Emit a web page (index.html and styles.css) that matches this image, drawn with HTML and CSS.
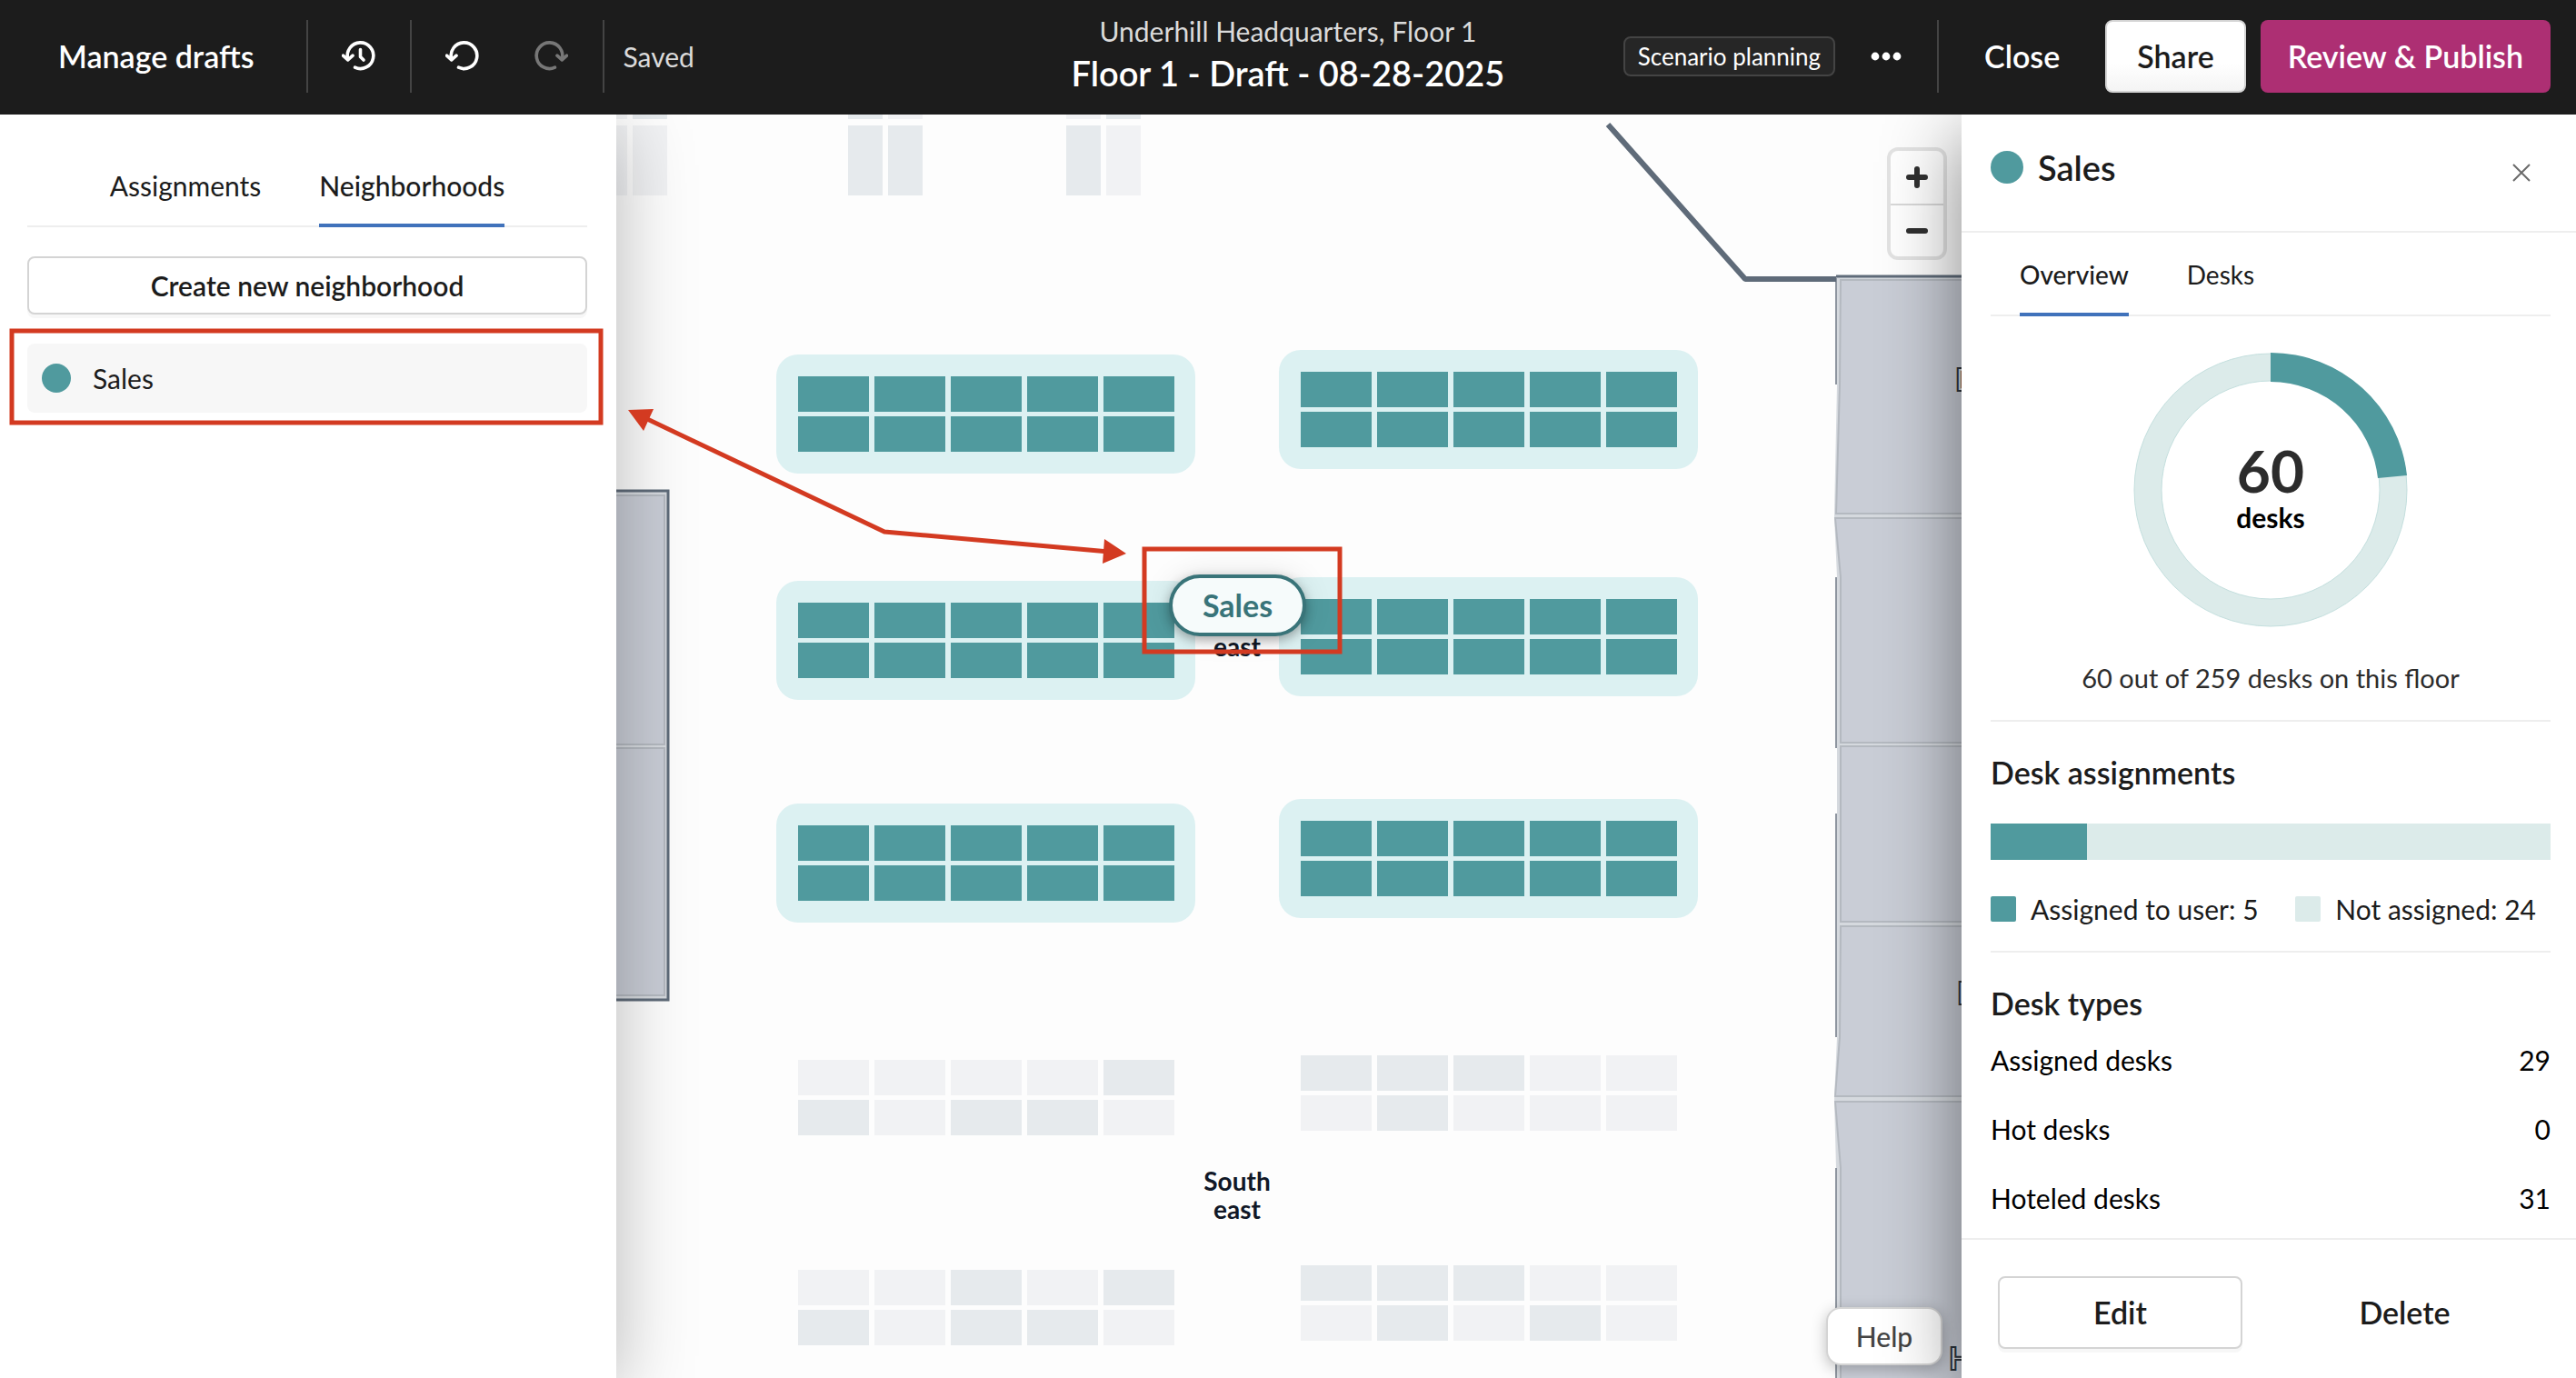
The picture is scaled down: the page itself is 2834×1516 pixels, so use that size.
FILE: index.html
```html
<!DOCTYPE html>
<html lang="en">
<head>
<meta charset="utf-8">
<meta name="viewport" content="width=device-width, initial-scale=1">
<title>Underhill Headquarters, Floor 1 - Draft</title>
<link rel="stylesheet" href="styles.css">
</head>
<body>
<div class="app">
  <header class="topbar">
    <div class="topbar-left">
      <button class="link-button" type="button">Manage drafts</button>
      <span class="rule"></span>
      <button class="icon-button" type="button" aria-label="Version history">
        <svg class="icon" viewBox="0 0 40 40">
          <path d="M14.500 32.200A14.300 14.300 0 1 0 6.700 23"/>
          <path d="M1.500 19.200L6.700 23.800L12 19.200"/>
          <path d="M20.500 12.500V20.500L24 24"/>
        </svg>
      </button>
      <span class="rule"></span>
      <div class="history-group">
        <button class="icon-button" type="button" aria-label="Undo">
          <svg class="icon" viewBox="0 0 40 40">
            <path d="M14.500 32.200A14.300 14.300 0 1 0 6.700 23"/>
            <path d="M1.500 19.200L6.700 23.800L12 19.200"/>
          </svg>
        </button>
        <button class="icon-button" type="button" aria-label="Redo" disabled>
          <svg class="icon" viewBox="0 0 40 40">
            <path d="M25.500 32.200A14.300 14.300 0 1 1 33.300 23"/>
            <path d="M38.500 19.200L33.300 23.800L28 19.200"/>
          </svg>
        </button>
      </div>
      <span class="rule"></span>
      <span class="saved">Saved</span>
    </div>
    <div class="topbar-title">
      <p class="crumb">Underhill Headquarters, Floor 1</p>
      <h1 class="draft-name">Floor 1 - Draft - 08-28-2025</h1>
    </div>
    <div class="topbar-right">
      <span class="chip">Scenario planning</span>
      <button class="more-button" type="button" aria-label="More options">
        <svg class="dots" viewBox="0 0 34 10"><circle cx="5" cy="5" r="4.400"/><circle cx="17" cy="5" r="4.400"/><circle cx="29" cy="5" r="4.400"/></svg>
      </button>
      <span class="rule"></span>
      <button class="link-button close-button" type="button">Close</button>
      <button class="share-button" type="button">Share</button>
      <button class="publish-button" type="button">Review &amp; Publish</button>
    </div>
  </header>

  <main class="workspace">
    <aside class="side-left">
      <div class="tabs tabs-left" role="tablist">
        <button class="tab" type="button" role="tab" aria-selected="false">Assignments</button>
        <button class="tab tab-active" type="button" role="tab" aria-selected="true">Neighborhoods</button>
      </div>
      <button class="outline-button create-button" type="button">Create new neighborhood</button>
      <ul class="neighborhoods">
        <li><a class="neighborhood" href="#sales"><span class="swatch-dot"></span>Sales</a></li>
      </ul>
    </aside>

    <section class="map" aria-label="Floor map">
      <svg class="floor" viewBox="678 126 1480 1390" preserveAspectRatio="xMinYMin slice">
        <defs>
          <g id="desk-row">
            <rect width="78" height="39"/><rect x="84" width="78" height="39"/><rect x="168" width="78" height="39"/><rect x="252" width="78" height="39"/><rect x="336" width="78" height="39"/>
          </g>
          <g id="desk-block"><use href="#desk-row"/><use href="#desk-row" y="44"/></g>
          <g id="pod">
            <rect class="pod-zone" width="461" height="131" rx="24"/>
            <use href="#desk-block" class="desk-sales" x="24" y="24"/>
          </g>
        </defs>

        <g class="desk-light">
          <path d="M678 126h12v5h-12zM678 138h12v77h-12zM696 138h38v77h-38zM977 126h38v5h-38zM1173 126h38v5h-38zM1217 138h38v77h-38z"/>
        </g>
        <g class="desk-dark">
          <path d="M696 126h38v5h-38zM933 126h38v5h-38zM933 138h38v77h-38zM977 138h38v77h-38zM1173 138h38v77h-38zM1217 126h38v5h-38z"/>
        </g>

        <use href="#pod" x="854" y="390"/>
        <use href="#pod" x="1407" y="385"/>
        <use href="#pod" x="854" y="639"/>
        <use href="#pod" x="1407" y="635"/>
        <use href="#pod" x="854" y="884"/>
        <use href="#pod" x="1407" y="879"/>

        <use href="#desk-block" class="desk-light" x="878" y="1166"/>
        <path class="desk-dark" d="M1214 1166h78v39h-78zM878 1210h78v39h-78zM1046 1210h78v39h-78zM1130 1210h78v39h-78z"/>
        <use href="#desk-block" class="desk-light" x="1431" y="1161"/>
        <path class="desk-dark" d="M1431 1161h78v39h-78zM1515 1161h78v39h-78zM1599 1161h78v39h-78zM1515 1205h78v39h-78z"/>
        <use href="#desk-block" class="desk-light" x="878" y="1397"/>
        <path class="desk-dark" d="M1046 1397h78v39h-78zM1214 1397h78v39h-78zM878 1441h78v39h-78zM1046 1441h78v39h-78zM1130 1441h78v39h-78z"/>
        <use href="#desk-block" class="desk-light" x="1431" y="1392"/>
        <path class="desk-dark" d="M1431 1392h78v39h-78zM1515 1392h78v39h-78zM1599 1392h78v39h-78zM1515 1436h78v39h-78zM1683 1436h78v39h-78z"/>

        <rect class="room-band" x="670" y="540" width="65" height="560"/>
        <path class="wall-thin" d="M670 540H735V1100H670"/>
        <rect class="room" x="660" y="545" width="71" height="274"/>
        <rect class="room" x="660" y="823" width="71" height="272"/>

        <path class="room-band" d="M2020 304H2170V1530H2020V1285L2018 1209L2021 1141V895V635L2018 567L2021 423Z"/>
        <path class="room" d="M2025 308H2170V565H2020L2024 423Z"/>
        <path class="room" d="M2019 570H2170V817H2025V635Z"/>
        <path class="room" d="M2025 821H2170V1014H2025Z"/>
        <path class="room" d="M2025 1019H2170V1206H2019L2024 1141Z"/>
        <path class="room" d="M2019 1212H2170V1530H2025V1285Z"/>
        <path class="wall-faint" d="M2020 306V423M2020 635V823M2020 895V1141M2020 1285V1530"/>
        <path class="wall" d="M1769 137L1920 307H2020"/>
        <path class="wall-thin" d="M2020 304H2170"/>
        <g class="room-label"><text x="2151" y="430">D</text><text x="2153" y="1105">D</text><text x="2144" y="1507">H</text></g>

        <g class="area-label">
          <text x="1361" y="722">east</text>
          <text x="1361" y="1310">South</text>
          <text x="1361" y="1341">east</text>
        </g>
      </svg>
      <button class="map-pin" type="button">Sales</button>
      <div class="zoom">
        <button class="zoom-button" type="button" aria-label="Zoom in"><svg class="zoom-icon" viewBox="0 0 24 24"><path d="M12 3V21M3 12H21"/></svg></button>
        <button class="zoom-button" type="button" aria-label="Zoom out"><svg class="zoom-icon" viewBox="0 0 24 24"><path d="M3 12H21"/></svg></button>
      </div>
      <button class="help-button" type="button">Help</button>
    </section>

    <aside class="side-right">
      <div class="detail-head">
        <h2 class="detail-title"><span class="title-dot"></span>Sales</h2>
        <button class="dismiss" type="button" aria-label="Close panel"><svg class="dismiss-icon" viewBox="0 0 20 20"><path d="M1 1L19 19M19 1L1 19"/></svg></button>
      </div>
      <div class="detail-body">
        <div class="tabs tabs-right" role="tablist">
          <button class="tab tab-active" type="button" role="tab" aria-selected="true">Overview</button>
          <button class="tab" type="button" role="tab" aria-selected="false">Desks</button>
        </div>
        <div class="donut">
          <svg class="donut-ring" viewBox="0 0 302 302" aria-hidden="true">
            <circle class="ring-rest" cx="151" cy="151" r="135"/>
            <circle class="ring-edge" cx="151" cy="151" r="150"/>
            <circle class="ring-edge" cx="151" cy="151" r="120"/>
            <path class="ring-share" d="M151 0A151 151 0 0 1 301 135L269 138A119 119 0 0 0 151 32Z"/>
          </svg>
          <p class="donut-label"><strong class="donut-count">60</strong><span class="donut-unit">desks</span></p>
        </div>
        <p class="donut-caption">60 out of 259 desks on this floor</p>
        <section class="block">
          <h3 class="block-title">Desk assignments</h3>
          <div class="bar"><span class="bar-fill" style="width: 17.24%"></span></div>
          <ul class="legend">
            <li class="legend-item"><span class="key key-on"></span>Assigned to user: 5</li>
            <li class="legend-item"><span class="key key-off"></span>Not assigned: 24</li>
          </ul>
        </section>
        <section class="block">
          <h3 class="block-title">Desk types</h3>
          <table class="types">
            <tr><th scope="row">Assigned desks</th><td>29</td></tr>
            <tr><th scope="row">Hot desks</th><td>0</td></tr>
            <tr><th scope="row">Hoteled desks</th><td>31</td></tr>
          </table>
        </section>
      </div>
      <footer class="detail-foot">
        <button class="outline-button edit-button" type="button">Edit</button>
        <button class="plain-button" type="button">Delete</button>
      </footer>
    </aside>
  </main>

  <svg class="annotations" width="1500" height="740" aria-hidden="true">
    <rect x="13" y="364" width="648" height="101"/>
    <rect x="1259" y="604" width="215" height="113"/>
    <path d="M710 460L973 585L1220 607"/>
    <path class="arrow-head" d="M691 451L719 450L708 474ZM1239 609L1215 593L1213 620Z"/>
  </svg>
</div>
</body>
</html>
```

FILE: styles.css
```css
:root {
  --teal: #509a9e;
  --teal-soft: #dcebea;
  --ink: #1c1c1c;
  --line: #eeeeee;
  --edge: #d4d4d4;
  --blue: #4072bb;
  --red: #d33a21;
}

* { box-sizing: border-box; }

body, h1, h2, h3, p, ul { margin: 0; padding: 0; }
ul { list-style: none; }

body {
  font-family: Lato, "Liberation Sans", sans-serif;
  font-size: 30px;
  line-height: 36px;
  color: var(--ink);
  background: #fdfdfd;
}

button {
  font: inherit;
  color: inherit;
  background: none;
  border: 0;
  padding: 0;
  cursor: pointer;
}

.app {
  position: relative;
  min-height: 100vh;
  display: grid;
  grid-template-rows: auto 1fr;
}

/* top bar */
.topbar {
  display: grid;
  grid-template-columns: 1fr auto 1fr;
  align-items: center;
  height: 126px;
  padding: 0 28px 2px;
  background: #1c1c1c;
  color: #ffffff;
}
.topbar-left, .topbar-right { display: flex; align-items: center; height: 80px; }
.topbar-left { padding-left: 36px; }
.topbar-right { justify-content: flex-end; }
.rule { width: 2px; height: 80px; background: #444444; }
.link-button { font-size: 34px; font-weight: 600; white-space: nowrap; }
.topbar-left .link-button { margin-right: 58px; }
.icon-button { display: flex; align-items: center; padding: 0 35px 0 37px; }
.history-group { display: flex; }
.history-group .icon-button + .icon-button { padding: 0 38px 0 20px; }
.icon {
  width: 40px;
  height: 40px;
  fill: none;
  stroke: #ffffff;
  stroke-width: 3.600;
  stroke-linecap: round;
  stroke-linejoin: round;
}
.icon-button:disabled .icon { stroke: #777777; }
.saved { margin-left: 20px; color: #dadada; }
.topbar-title { text-align: center; }
.crumb { line-height: 36px; color: #dadada; }
.draft-name { font-size: 38px; line-height: 56px; font-weight: 600; }
.chip {
  padding: 2px 14px;
  border: 2px solid #444444;
  border-radius: 8px;
  background: #262626;
  font-size: 26px;
}
.more-button { display: flex; padding: 0 39px; }
.dots { width: 34px; height: 10px; fill: #ffffff; }
.close-button { margin: 0 50px; }
.share-button, .publish-button {
  height: 80px;
  border-radius: 8px;
  font-size: 34px;
  font-weight: 600;
}
.share-button {
  padding: 0 33px;
  border: 2px solid var(--edge);
  background: linear-gradient(#ffffff 60%, #f4f4f4);
  color: var(--ink);
}
.publish-button { margin-left: 16px; padding: 0 30px; background: #ad2f73; }

/* workspace */
.workspace {
  display: grid;
  grid-template-columns: 678px minmax(0, 1fr) 676px;
}
.side-left, .side-right { position: relative; background: #ffffff; }
.side-left { padding: 0 32px 0 30px; box-shadow: 0 16px 80px rgba(0, 0, 0, .28); clip-path: inset(0 -120px 0 0); z-index: 1; }
.side-right {
  display: flex;
  flex-direction: column;
  box-shadow: 0 24px 80px rgba(0, 0, 0, .48);
  clip-path: inset(0 0 0 -120px);
  z-index: 1;
}

.tabs { display: flex; border-bottom: 2px solid var(--line); }
.tab {
  margin-bottom: -2px;
  border-bottom: 4px solid transparent;
  line-height: 36px;
}
.tab-active { border-color: var(--blue); font-weight: 500; }
.tabs-left { justify-content: center; gap: 64px; padding-top: 60px; }
.tabs-left .tab { padding-bottom: 24px; }
.tabs-right { gap: 64px; padding: 28px 32px 0; }
.tabs-right .tab { padding-bottom: 24px; font-size: 28px; }

.outline-button {
  border: 2px solid var(--edge);
  border-radius: 8px;
  background: #ffffff;
  box-shadow: 0 4px 0 #f7f7f7;
  font-weight: 600;
}
.create-button { width: 100%; height: 64px; margin-top: 32px; }
.neighborhoods { margin-top: 32px; }
.neighborhood {
  display: flex;
  align-items: center;
  gap: 24px;
  height: 76px;
  padding: 0 16px;
  border-radius: 8px;
  background: #f7f7f7;
  color: var(--ink);
  text-decoration: none;
}
.swatch-dot { width: 32px; height: 32px; border-radius: 50%; background: var(--teal); }

/* floor map */
.map { position: relative; overflow: hidden; background: #fdfdfd; }
.floor { position: absolute; inset: 0; width: 100%; height: 100%; }
.pod-zone { fill: #dcf1f2; }
.desk-sales { fill: var(--teal); }
.desk-light { fill: #f1f2f4; }
.desk-dark { fill: #e6eaed; }
.room { fill: #c9cdd6; stroke: #b4b9c0; stroke-width: 2; }
.room-band { fill: #d5d9de; }
.wall { fill: none; stroke: #5f6b79; stroke-width: 6; stroke-linejoin: bevel; }
.wall-thin { fill: none; stroke: #5f6b79; stroke-width: 3; }
.wall-faint { fill: none; stroke: #8e959f; stroke-width: 2; }
.room-label text { font-size: 34px; font-weight: 700; fill: #d5d9de; stroke: #2c343d; stroke-width: 2; }
.area-label text { font-size: 28px; font-weight: 700; fill: #111827; text-anchor: middle; }

.map-pin {
  position: absolute;
  left: 608px;
  top: 506px;
  width: 151px;
  height: 68px;
  border: 4px solid #397479;
  border-radius: 34px;
  background: #f6fbfb;
  box-shadow: 0 4px 12px rgba(0, 0, 0, .3), 0 0 32px rgba(0, 0, 0, .1);
  color: #397479;
  font-size: 34px;
  font-weight: 700;
}
.zoom {
  position: absolute;
  top: 36px;
  right: 16px;
  width: 66px;
  border: 4px solid rgba(0, 0, 0, .1);
  border-radius: 12px;
  background: #ffffff;
  background-clip: padding-box;
}
.zoom-button { display: grid; place-items: center; width: 100%; height: 58px; }
.zoom-button + .zoom-button { border-top: 2px solid #d9d9d9; }
.zoom-icon { width: 24px; height: 24px; stroke: #303030; stroke-width: 6; stroke-linecap: round; }
.help-button {
  position: absolute;
  right: 21px;
  bottom: 14px;
  width: 128px;
  height: 64px;
  border: 2px solid var(--edge);
  border-radius: 16px;
  background: #ffffff;
  box-shadow: 0 4px 16px rgba(0, 0, 0, .25);
  color: #444444;
  font-weight: 500;
}

/* detail panel */
.detail-head {
  display: flex;
  justify-content: space-between;
  align-items: center;
  height: 130px;
  padding: 0 50px 12px 32px;
  border-bottom: 2px solid var(--line);
}
.detail-title { display: flex; align-items: center; gap: 16px; font-size: 38px; font-weight: 600; }
.title-dot { width: 36px; height: 36px; border-radius: 50%; background: var(--teal); }
.dismiss { display: flex; margin-top: 12px; }
.dismiss-icon { width: 20px; height: 20px; stroke: #6a6a6a; stroke-width: 2; }
.detail-body { flex: 1; padding: 0 28px 0 32px; }

.donut { display: grid; place-items: center; margin-top: 40px; }
.donut-ring, .donut-label { grid-area: 1 / 1; }
.donut-ring { width: 302px; height: 302px; }
.ring-rest { fill: none; stroke: var(--teal-soft); stroke-width: 30; }
.ring-edge { fill: none; stroke: #c4dfde; stroke-width: 1; }
.ring-share { fill: var(--teal); }
.donut-label { display: grid; justify-items: center; padding-bottom: 6px; }
.donut-count { font-size: 64px; line-height: 66px; font-weight: 700; color: #2c2c2c; }
.donut-unit { line-height: 36px; font-weight: 700; color: #000000; }
.donut-caption { margin: 38px 0 28px; font-size: 29px; text-align: center; color: #2c2c2c; }

.block { border-top: 2px solid var(--line); padding-top: 34px; }
.block-title { font-size: 34px; line-height: 44px; font-weight: 600; }
.bar { height: 40px; margin-top: 34px; background: var(--teal-soft); }
.bar-fill { display: block; height: 100%; background: var(--teal); }
.legend { display: flex; justify-content: space-between; padding: 36px 16px 28px 0; }
.legend-item { display: flex; align-items: center; gap: 16px; }
.key { width: 28px; height: 28px; border-radius: 2px; }
.key-on { background: var(--teal); }
.key-off { background: var(--teal-soft); }
.types { width: 100%; margin-top: 2px; border-collapse: collapse; color: #000000; }
.types th, .types td { height: 76px; padding: 0; font-weight: 400; }
.types th { text-align: left; }
.types td { text-align: right; }

.detail-foot {
  display: grid;
  grid-template-columns: 1fr 1fr;
  gap: 44px;
  padding: 40px 54px 32px 40px;
  border-top: 2px solid var(--line);
}
.edit-button { height: 80px; font-size: 34px; }
.plain-button { font-size: 34px; font-weight: 600; }

/* callouts drawn over the panels */
.annotations { position: absolute; top: 0; left: 0; z-index: 2; pointer-events: none; fill: none; stroke: var(--red); stroke-width: 5; }
.arrow-head { fill: var(--red); stroke: none; }
```
